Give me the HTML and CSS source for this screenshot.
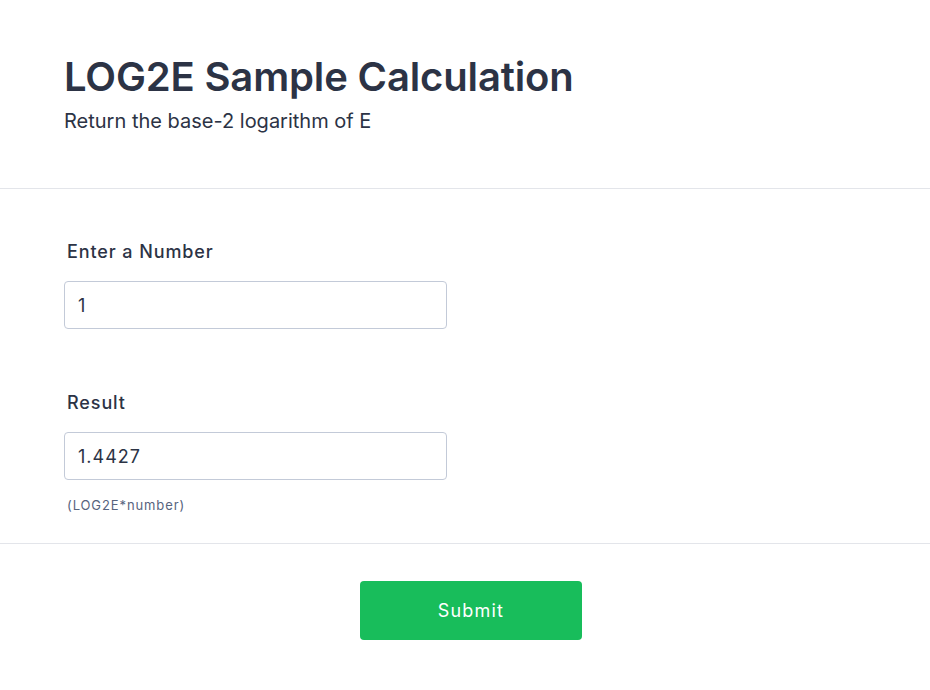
FILE: index.html
```html
<!DOCTYPE html>
<html lang="en">
<head>
    <meta charset="UTF-8">
    <title>LOG2E Sample Calculation</title>
    <link rel="stylesheet" href="styles.css">
</head>
<body>
    <div class="form-header">
        <h1 class="form-title">LOG2E Sample Calculation</h1>
        <p class="form-subtitle">Return the base-2 logarithm of E</p>
    </div>

    <div class="form-body">
        <div class="form-line">
            <label class="form-label" for="numberInput">Enter a Number</label>
            <input class="form-input" id="numberInput" type="text" value="1">
        </div>

        <div class="form-line form-line-result">
            <label class="form-label" for="resultInput">Result</label>
            <input class="form-input" id="resultInput" type="text" value="1.4427" readonly>
            <div class="form-sublabel">(LOG2E*number)</div>
        </div>
    </div>

    <div class="form-footer">
        <button class="btn-submit" id="submitBtn">Submit</button>
    </div>

    <script>
        const numberInput = document.getElementById('numberInput');
        const resultInput = document.getElementById('resultInput');

        // Recalculate on input
        numberInput.addEventListener('input', () => {
            const n = parseFloat(numberInput.value);
            resultInput.value = isNaN(n) ? '' : +(Math.LOG2E * n).toFixed(4);
        });
    </script>
</body>
</html>
```

FILE: styles.css
```css
body {
    font-family: 'Inter', 'Noto Sans', sans-serif;
    background-color: #ffffff;
    color: #2c3345;
    margin: 0;
}
.form-header {
    padding: 53px 64px 0;
    height: 135px;
    border-bottom: 1px solid #e3e5ea;
}
.form-title {
    font-size: 40px;
    line-height: 48px;
    font-weight: 600;
    letter-spacing: -0.15px;
    margin: 0;
}
.form-subtitle {
    font-size: 20px;
    line-height: 28px;
    margin: 6px 0 0;
}
.form-body {
    padding: 49px 64px 29px;
    border-bottom: 1px solid #e3e5ea;
}
.form-line {
    display: flex;
    flex-direction: column;
    align-items: flex-start;
}
.form-line-result {
    margin-top: 60px;
}
.form-label {
    font-size: 18px;
    line-height: 27px;
    font-weight: 500;
    letter-spacing: 0.9px;
    padding-left: 3px;
    margin-bottom: 16px;
}
.form-input {
    box-sizing: border-box;
    width: 383px;
    height: 48px;
    padding: 0 13px;
    border: 1px solid #c3cad8;
    border-radius: 4px;
    font-family: inherit;
    font-size: 18px;
    letter-spacing: 1px;
    color: #2c3345;
    outline: none;
}
.form-sublabel {
    font-size: 13px;
    line-height: 18px;
    letter-spacing: 0.9px;
    color: #57647e;
    padding-left: 3px;
    margin-top: 16px;
}
.form-footer {
    display: flex;
    justify-content: center;
    padding: 37px 0 0 12px;
}
.btn-submit {
    width: 222px;
    height: 59px;
    background-color: #18bd5b;
    color: #ffffff;
    border: none;
    border-radius: 4px;
    font-family: inherit;
    font-size: 18px;
    font-weight: 400;
    letter-spacing: 1.2px;
    cursor: pointer;
}
```
